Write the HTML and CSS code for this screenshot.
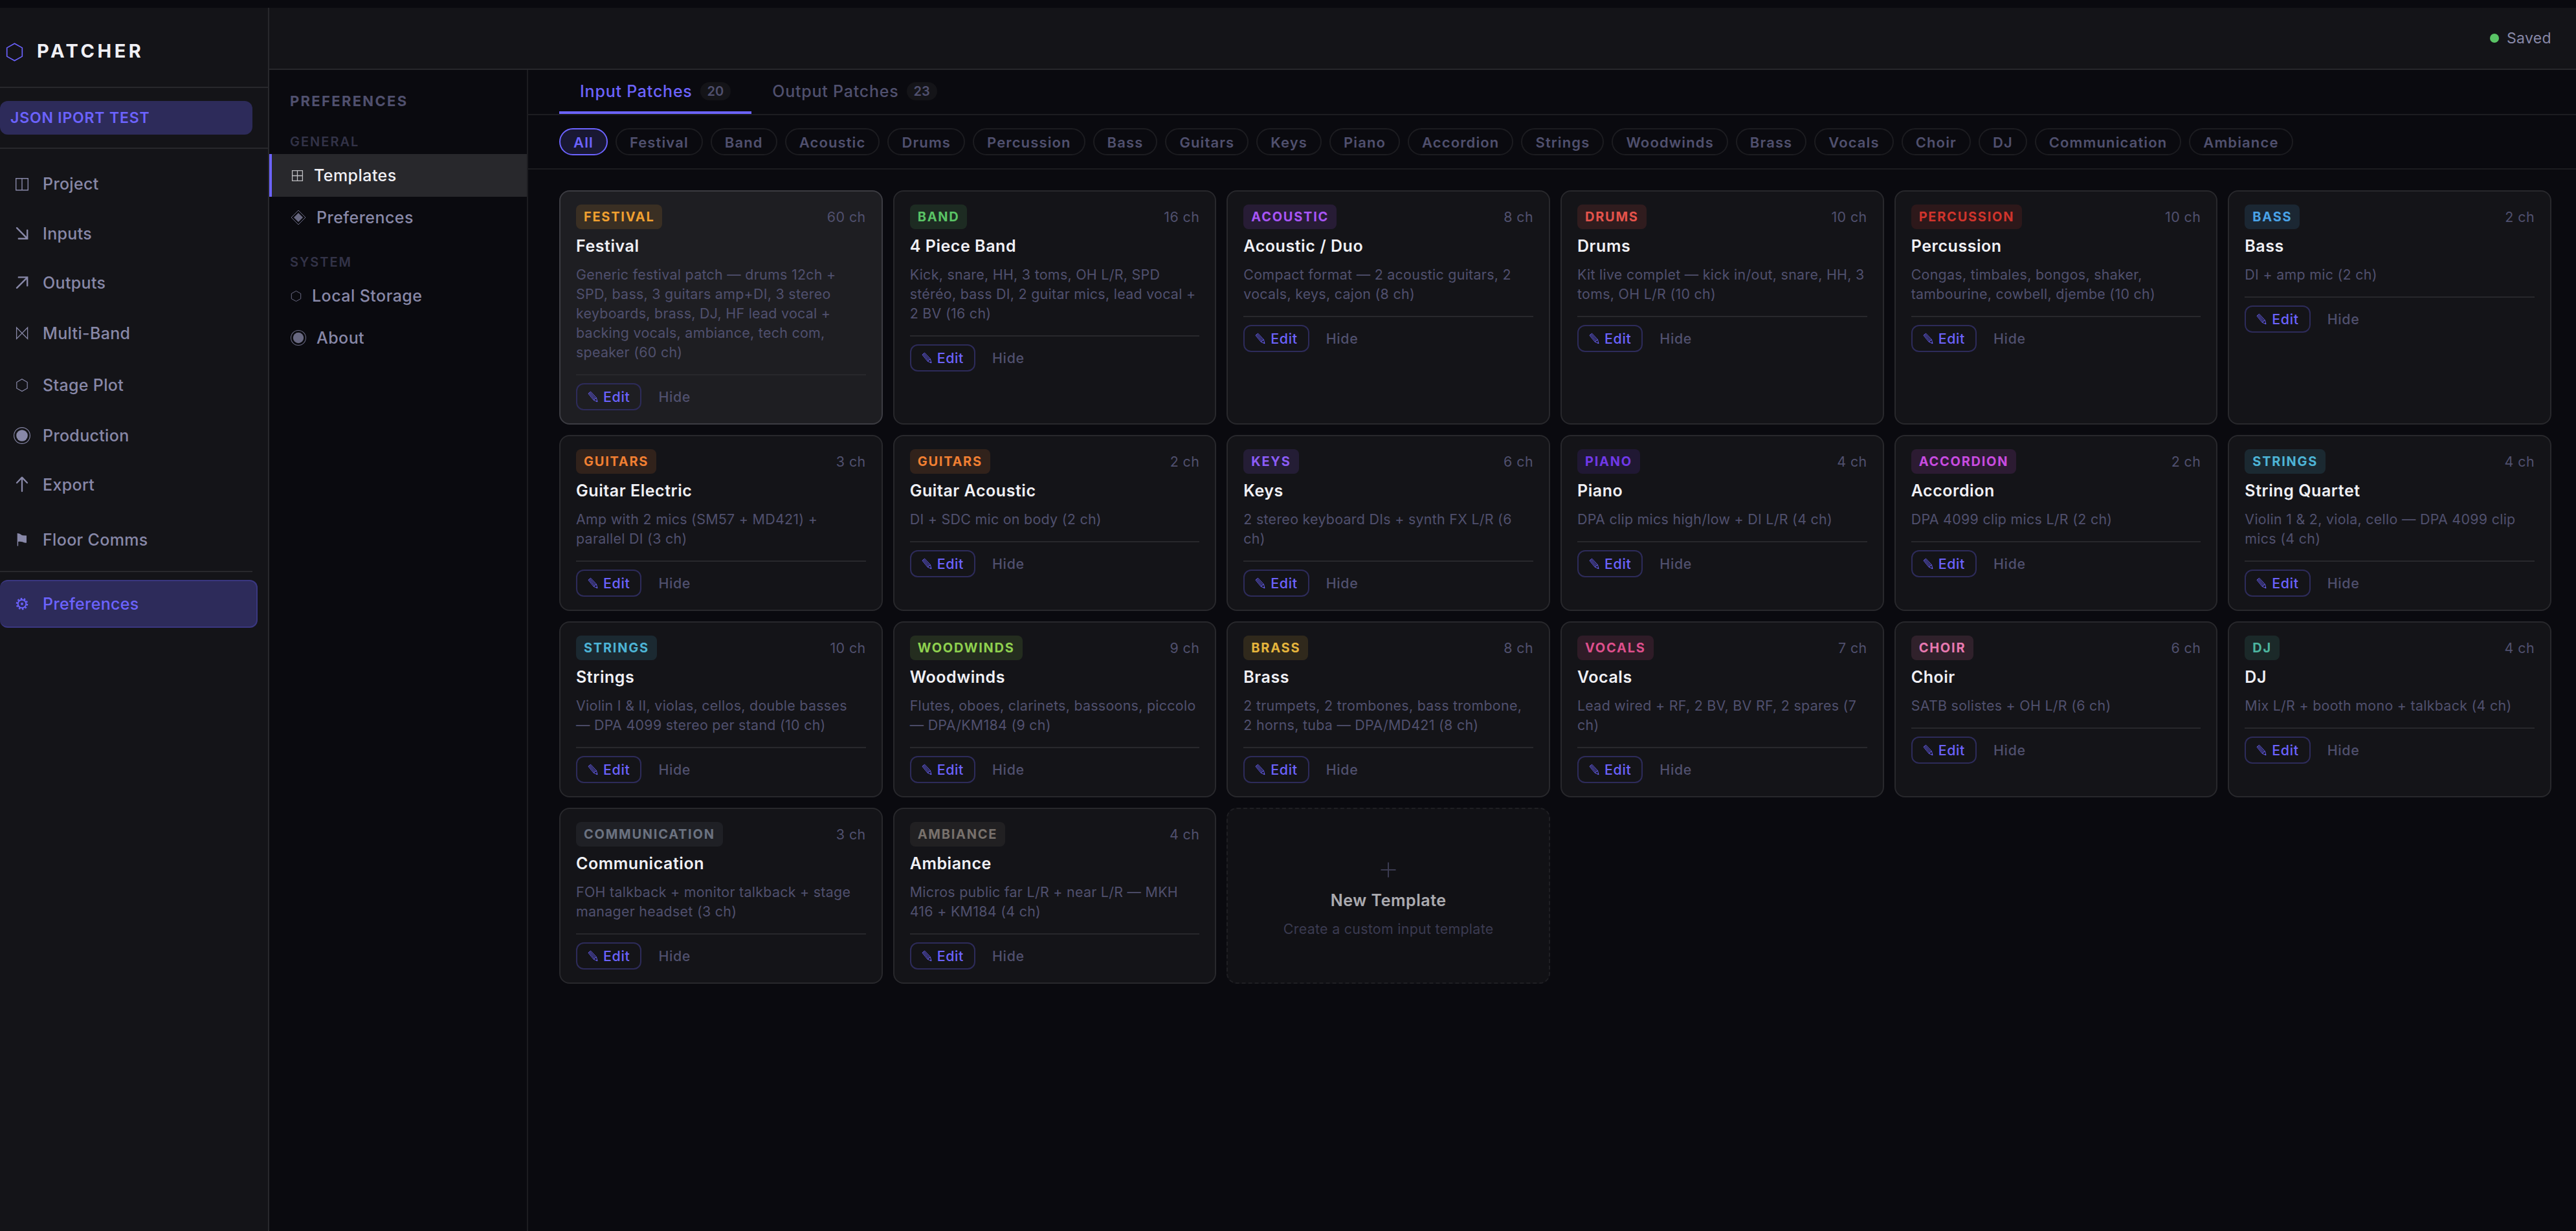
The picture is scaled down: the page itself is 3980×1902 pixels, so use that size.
FILE: index.html
```html
<!DOCTYPE html>
<html lang="en">
<head>
    <meta charset="UTF-8">
    <meta name="viewport" content="width=device-width, initial-scale=1.0">
    <title>Patcher - Preferences</title>
    <link rel="stylesheet" href="styles.css">
</head>
<body>
<svg class="defs">
    <symbol id="pencil" viewBox="0 0 16 18"><path d="M1 4.2 4.6 1.2 13.4 10.6 15 16.8 9.2 14.2z M2.2 3.2 10.6 13.2 M3.4 2.2 12 11.9 M9.2 14.2 13.4 10.6" fill="none" stroke="currentColor" stroke-width="0.9"/><path d="M13 15.9 14.2 14.6 15 16.9z" fill="currentColor"/></symbol>
    <symbol id="hexagon" viewBox="0 0 28 28"><path d="M14 1.2 25.4 7.6V20.4L14 26.8 2.6 20.4V7.6z" fill="none" stroke="currentColor"/></symbol>
    <symbol id="target" viewBox="0 0 28 28"><circle cx="14" cy="14" r="12.4" fill="none" stroke="currentColor" stroke-width="1.1"/><circle cx="14" cy="14" r="8.8" fill="currentColor"/></symbol>
</svg>

<div class="app">
    <aside class="sidebar">
        <div class="logo"><svg class="logo-icon"><use href="#hexagon"/></svg><span>PATCHER</span></div>
        <div class="project"><div class="project-name">JSON IPORT TEST</div></div>
        <nav class="nav">
            <a class="nav-item"><svg viewBox="0 0 28 28"><path d="M4.7 5.8h18.6v18H4.7zM14 5.8v18" fill="none" stroke="currentColor" stroke-width="1.4"/></svg>Project</a>
            <a class="nav-item"><svg viewBox="0 0 28 28"><path d="M6 5.2 22 21.4M8.8 21.8h13.4V8.6" fill="none" stroke="currentColor" stroke-width="2.4" stroke-linecap="round"/></svg>Inputs</a>
            <a class="nav-item"><svg viewBox="0 0 28 28"><path d="M6 21.8 22 5.8M8.8 5.4h13.4v13" fill="none" stroke="currentColor" stroke-width="2.4" stroke-linecap="round"/></svg>Outputs</a>
            <a class="nav-item"><svg viewBox="0 0 28 28"><path d="M5.6 5.2v17.2L22.6 5.2v17.2z" fill="none" stroke="currentColor" stroke-width="1.3"/></svg>Multi-Band</a>
            <a class="nav-item"><svg viewBox="0 0 28 28"><path d="M14 4.8 22.2 9.5v9.4L14 23.6 5.8 18.9V9.5z" fill="none" stroke="currentColor" stroke-width="1.2"/></svg>Stage Plot</a>
            <a class="nav-item"><svg><use href="#target"/></svg>Production</a>
            <a class="nav-item"><svg viewBox="0 0 28 28"><path d="M14 24V3M6 11l8-8.4L22 11" fill="none" stroke="currentColor" stroke-width="2.3" stroke-linecap="round" stroke-linejoin="round"/></svg>Export</a>
            <a class="nav-item"><svg viewBox="0 0 28 28"><path d="M7.4 4v19.6" stroke="currentColor" stroke-width="1.4"/><path d="M7.4 4.4c4-.8 5 2.8 8 2.8l5.6.4v11c-3 .6-4-.4-6.5-1.3-3-1-5-.6-7.1-.3z" fill="currentColor"/></svg>Floor Comms</a>
            <div class="nav-sep"></div>
            <a class="nav-item active"><svg viewBox="0 0 28 28"><g fill="none" stroke="currentColor"><circle cx="14" cy="14" r="6.3" stroke-width="1.9"/><circle cx="14" cy="14" r="8.2" stroke-width="2.2" stroke-dasharray="2.58 2.58"/></g><circle cx="14" cy="14" r="1.9" fill="currentColor"/></svg>Preferences</a>
        </nav>
    </aside>

    <div class="content">
        <header class="topbar"><span class="dot"></span><span class="saved">Saved</span></header>
        <div class="page">
            <aside class="prefs">
                <h2>PREFERENCES</h2>
                <h3>GENERAL</h3>
                <a class="pref-item active"><svg class="i18" viewBox="0 0 18 18"><path d="M1.5 1.5h15v15h-15zM9 1.5v15M1.5 9h15" fill="none" stroke="currentColor" stroke-width="1.2"/></svg>Templates</a>
                <a class="pref-item"><svg class="i24" viewBox="0 0 24 24"><path d="M12 1 23 12 12 23 1 12z" fill="none" stroke="currentColor"/><path d="M12 5 19 12 12 19 5 12z" fill="currentColor"/></svg>Preferences</a>
                <h3 class="second">SYSTEM</h3>
                <a class="pref-item"><svg class="i17" viewBox="0 0 17 17"><path d="M8.5.6 15.7 4.6V12.6L8.5 16.5 1.3 12.6V4.6z" fill="none" stroke="currentColor"/></svg>Local Storage</a>
                <a class="pref-item"><svg class="i26"><use href="#target"/></svg>About</a>
            </aside>

            <main class="main">
                <div class="tabs">
                    <a class="tab active">Input Patches<span class="count">20</span></a>
                    <a class="tab">Output Patches<span class="count">23</span></a>
                </div>
                <div class="filters">
                    <span class="pill active">All</span>
                    <span class="pill">Festival</span>
                    <span class="pill">Band</span>
                    <span class="pill">Acoustic</span>
                    <span class="pill">Drums</span>
                    <span class="pill">Percussion</span>
                    <span class="pill">Bass</span>
                    <span class="pill">Guitars</span>
                    <span class="pill">Keys</span>
                    <span class="pill">Piano</span>
                    <span class="pill">Accordion</span>
                    <span class="pill">Strings</span>
                    <span class="pill">Woodwinds</span>
                    <span class="pill">Brass</span>
                    <span class="pill">Vocals</span>
                    <span class="pill">Choir</span>
                    <span class="pill">DJ</span>
                    <span class="pill">Communication</span>
                    <span class="pill">Ambiance</span>
                </div>

                <div class="grid">
                    <div class="card hover">
                        <div class="card-top"><span class="badge festival">FESTIVAL</span><span class="ch">60 ch</span></div>
                        <h4>Festival</h4>
                        <p>Generic festival patch — drums 12ch + SPD, bass, 3 guitars amp+DI, 3 stereo keyboards, brass, DJ, HF lead vocal + backing vocals, ambiance, tech com, speaker (60 ch)</p>
                        <div class="actions"><button class="edit"><svg><use href="#pencil"/></svg>Edit</button><button class="hide">Hide</button></div>
                    </div>
                    <div class="card">
                        <div class="card-top"><span class="badge band">BAND</span><span class="ch">16 ch</span></div>
                        <h4>4 Piece Band</h4>
                        <p>Kick, snare, HH, 3 toms, OH L/R, SPD stéréo, bass DI, 2 guitar mics, lead vocal + 2 BV (16 ch)</p>
                        <div class="actions"><button class="edit"><svg><use href="#pencil"/></svg>Edit</button><button class="hide">Hide</button></div>
                    </div>
                    <div class="card">
                        <div class="card-top"><span class="badge acoustic">ACOUSTIC</span><span class="ch">8 ch</span></div>
                        <h4>Acoustic / Duo</h4>
                        <p>Compact format — 2 acoustic guitars, 2 vocals, keys, cajon (8 ch)</p>
                        <div class="actions"><button class="edit"><svg><use href="#pencil"/></svg>Edit</button><button class="hide">Hide</button></div>
                    </div>
                    <div class="card">
                        <div class="card-top"><span class="badge drums">DRUMS</span><span class="ch">10 ch</span></div>
                        <h4>Drums</h4>
                        <p>Kit live complet — kick in/out, snare, HH, 3 toms, OH L/R (10 ch)</p>
                        <div class="actions"><button class="edit"><svg><use href="#pencil"/></svg>Edit</button><button class="hide">Hide</button></div>
                    </div>
                    <div class="card">
                        <div class="card-top"><span class="badge percussion">PERCUSSION</span><span class="ch">10 ch</span></div>
                        <h4>Percussion</h4>
                        <p>Congas, timbales, bongos, shaker, tambourine, cowbell, djembe (10 ch)</p>
                        <div class="actions"><button class="edit"><svg><use href="#pencil"/></svg>Edit</button><button class="hide">Hide</button></div>
                    </div>
                    <div class="card">
                        <div class="card-top"><span class="badge bass">BASS</span><span class="ch">2 ch</span></div>
                        <h4>Bass</h4>
                        <p>DI + amp mic (2 ch)</p>
                        <div class="actions"><button class="edit"><svg><use href="#pencil"/></svg>Edit</button><button class="hide">Hide</button></div>
                    </div>

                    <div class="card">
                        <div class="card-top"><span class="badge guitars">GUITARS</span><span class="ch">3 ch</span></div>
                        <h4>Guitar Electric</h4>
                        <p>Amp with 2 mics (SM57 + MD421) + parallel DI (3 ch)</p>
                        <div class="actions"><button class="edit"><svg><use href="#pencil"/></svg>Edit</button><button class="hide">Hide</button></div>
                    </div>
                    <div class="card">
                        <div class="card-top"><span class="badge guitars">GUITARS</span><span class="ch">2 ch</span></div>
                        <h4>Guitar Acoustic</h4>
                        <p>DI + SDC mic on body (2 ch)</p>
                        <div class="actions"><button class="edit"><svg><use href="#pencil"/></svg>Edit</button><button class="hide">Hide</button></div>
                    </div>
                    <div class="card">
                        <div class="card-top"><span class="badge keys">KEYS</span><span class="ch">6 ch</span></div>
                        <h4>Keys</h4>
                        <p>2 stereo keyboard DIs + synth FX L/R (6 ch)</p>
                        <div class="actions"><button class="edit"><svg><use href="#pencil"/></svg>Edit</button><button class="hide">Hide</button></div>
                    </div>
                    <div class="card">
                        <div class="card-top"><span class="badge piano">PIANO</span><span class="ch">4 ch</span></div>
                        <h4>Piano</h4>
                        <p>DPA clip mics high/low + DI L/R (4 ch)</p>
                        <div class="actions"><button class="edit"><svg><use href="#pencil"/></svg>Edit</button><button class="hide">Hide</button></div>
                    </div>
                    <div class="card">
                        <div class="card-top"><span class="badge accordion">ACCORDION</span><span class="ch">2 ch</span></div>
                        <h4>Accordion</h4>
                        <p>DPA 4099 clip mics L/R (2 ch)</p>
                        <div class="actions"><button class="edit"><svg><use href="#pencil"/></svg>Edit</button><button class="hide">Hide</button></div>
                    </div>
                    <div class="card">
                        <div class="card-top"><span class="badge strings">STRINGS</span><span class="ch">4 ch</span></div>
                        <h4>String Quartet</h4>
                        <p>Violin 1 &amp; 2, viola, cello — DPA 4099 clip mics (4 ch)</p>
                        <div class="actions"><button class="edit"><svg><use href="#pencil"/></svg>Edit</button><button class="hide">Hide</button></div>
                    </div>

                    <div class="card">
                        <div class="card-top"><span class="badge strings">STRINGS</span><span class="ch">10 ch</span></div>
                        <h4>Strings</h4>
                        <p>Violin I &amp; II, violas, cellos, double basses —&nbsp;DPA 4099 stereo per stand (10 ch)</p>
                        <div class="actions"><button class="edit"><svg><use href="#pencil"/></svg>Edit</button><button class="hide">Hide</button></div>
                    </div>
                    <div class="card">
                        <div class="card-top"><span class="badge woodwinds">WOODWINDS</span><span class="ch">9 ch</span></div>
                        <h4>Woodwinds</h4>
                        <p>Flutes, oboes, clarinets, bassoons, piccolo — DPA/KM184 (9 ch)</p>
                        <div class="actions"><button class="edit"><svg><use href="#pencil"/></svg>Edit</button><button class="hide">Hide</button></div>
                    </div>
                    <div class="card">
                        <div class="card-top"><span class="badge brass">BRASS</span><span class="ch">8 ch</span></div>
                        <h4>Brass</h4>
                        <p>2 trumpets, 2 trombones, bass trombone, 2 horns, tuba — DPA/MD421 (8 ch)</p>
                        <div class="actions"><button class="edit"><svg><use href="#pencil"/></svg>Edit</button><button class="hide">Hide</button></div>
                    </div>
                    <div class="card">
                        <div class="card-top"><span class="badge vocals">VOCALS</span><span class="ch">7 ch</span></div>
                        <h4>Vocals</h4>
                        <p>Lead wired + RF, 2 BV, BV RF, 2 spares (7 ch)</p>
                        <div class="actions"><button class="edit"><svg><use href="#pencil"/></svg>Edit</button><button class="hide">Hide</button></div>
                    </div>
                    <div class="card">
                        <div class="card-top"><span class="badge choir">CHOIR</span><span class="ch">6 ch</span></div>
                        <h4>Choir</h4>
                        <p>SATB solistes + OH L/R (6 ch)</p>
                        <div class="actions"><button class="edit"><svg><use href="#pencil"/></svg>Edit</button><button class="hide">Hide</button></div>
                    </div>
                    <div class="card">
                        <div class="card-top"><span class="badge dj">DJ</span><span class="ch">4 ch</span></div>
                        <h4>DJ</h4>
                        <p>Mix L/R + booth mono + talkback (4 ch)</p>
                        <div class="actions"><button class="edit"><svg><use href="#pencil"/></svg>Edit</button><button class="hide">Hide</button></div>
                    </div>

                    <div class="card">
                        <div class="card-top"><span class="badge communication">COMMUNICATION</span><span class="ch">3 ch</span></div>
                        <h4>Communication</h4>
                        <p>FOH talkback + monitor talkback + stage manager headset (3 ch)</p>
                        <div class="actions"><button class="edit"><svg><use href="#pencil"/></svg>Edit</button><button class="hide">Hide</button></div>
                    </div>
                    <div class="card">
                        <div class="card-top"><span class="badge ambiance">AMBIANCE</span><span class="ch">4 ch</span></div>
                        <h4>Ambiance</h4>
                        <p>Micros public far L/R + near L/R — MKH 416 + KM184 (4 ch)</p>
                        <div class="actions"><button class="edit"><svg><use href="#pencil"/></svg>Edit</button><button class="hide">Hide</button></div>
                    </div>
                    <div class="card new">
                        <svg class="plus" viewBox="0 0 24 24"><path d="M12 .5v23M.5 12h23" stroke="currentColor" stroke-width="2"/></svg>
                        <h4>New Template</h4>
                        <p>Create a custom input template</p>
                    </div>
                </div>
            </main>
        </div>
    </div>
</div>
</body>
</html>
```
FILE: styles.css
```css
* {
    box-sizing: border-box;
}

body {
    margin: 0;
    padding-top: 12px;
    height: 1902px;
    background: #0a0a0f;
    font-family: Inter, "Liberation Sans", sans-serif;
    font-size: 25px;
    letter-spacing: 0.0135em;
    color: #f0f0f5;
    overflow: hidden;
}

h2, h3, h4, p {
    margin: 0;
}

svg {
    flex-shrink: 0;
}

.defs {
    display: none;
}

.app {
    display: flex;
    height: 1890px;
}

/* left sidebar */
.sidebar {
    width: 416px;
    background: #141418;
    border-right: 2px solid #28282c;
}

.logo {
    height: 124px;
    display: flex;
    align-items: center;
    gap: 20px;
    padding: 14px 0 0 8px;
    border-bottom: 2px solid #28282c;
    font-size: 29px;
    font-weight: 700;
    letter-spacing: 0.156em;
}

.logo span {
    margin-top: -3px;
}

.logo-icon {
    width: 29px;
    height: 29px;
    color: #6c63ff;
    stroke-width: 1.6;
}

.project {
    height: 94px;
    padding: 20px 24px 0 0;
    border-bottom: 2px solid #28282c;
}

.project-name {
    height: 52px;
    line-height: 52px;
    padding-left: 16px;
    border-radius: 12px;
    background: #2d2b5a;
    color: #6c63ff;
    font-size: 23px;
    font-weight: 600;
    letter-spacing: 0.035em;
}

.nav {
    display: grid;
    grid-template-rows: 76px 78px 74px 82px 78px 78px 74px 96px 2px 86px;
    padding: 16px 16px 0 0;
}

.nav-item {
    display: flex;
    align-items: center;
    gap: 18px;
    padding-left: 20px;
    font-weight: 500;
    color: #8888a8;
}

.nav-item svg {
    width: 28px;
    height: 28px;
}

.nav-sep {
    margin-right: 8px;
    background: #28282c;
}

.nav-item.active {
    margin-top: 12px;
    border: 2px solid #3a3780;
    border-left: none;
    border-radius: 12px;
    background: #2d2b5a;
    color: #6c63ff;
}

.content {
    flex: 1;
    display: flex;
    flex-direction: column;
}

.topbar {
    height: 96px;
    display: flex;
    align-items: center;
    justify-content: flex-end;
    gap: 12px;
    padding-right: 38px;
    background: #141418;
    border-bottom: 2px solid #28282c;
}

.dot {
    width: 14px;
    height: 14px;
    border-radius: 50%;
    background: #5ac466;
}

.saved {
    font-size: 23px;
    color: #8888a8;
}

.page {
    flex: 1;
    display: flex;
}

/* preferences menu */
.prefs {
    width: 400px;
    padding-top: 33px;
    border-right: 2px solid #1c1c20;
}

.prefs h2 {
    height: 30px;
    line-height: 30px;
    padding-left: 32px;
    font-size: 22px;
    font-weight: 700;
    letter-spacing: 0.105em;
    color: #50506e;
}

.prefs h3 {
    height: 67px;
    padding: 35px 0 0 32px;
    font-size: 20px;
    line-height: 26px;
    font-weight: 600;
    letter-spacing: 0.1em;
    color: #333348;
}

.prefs h3.second {
    height: 57px;
    padding-top: 25px;
}

.pref-item {
    display: flex;
    align-items: center;
    gap: 16px;
    height: 66px;
    padding-left: 33px;
    font-weight: 500;
    letter-spacing: 0.018em;
    color: #8888a8;
}

.pref-item + .pref-item {
    height: 63px;
}

.pref-item svg {
    opacity: 0.75;
}

.pref-item.active {
    padding-left: 30px;
    border-left: 4px solid #6c63ff;
    background: #28282c;
    color: #f0f0f5;
}

.i17 {
    width: 17px;
    height: 17px;
}

.i18 {
    width: 19px;
    height: 19px;
}

.i24 {
    width: 24px;
    height: 24px;
}

.i26 {
    width: 26px;
    height: 26px;
    margin: 0 -1px;
}

.main {
    flex: 1;
}

.tabs {
    display: flex;
    height: 70px;
    padding-left: 48px;
    border-bottom: 2px solid #1c1c20;
}

.tab {
    display: flex;
    align-items: center;
    gap: 12px;
    height: 68px;
    padding: 2px 32px 0;
    border-bottom: 4px solid transparent;
    font-weight: 500;
    letter-spacing: 0.031em;
    color: #50506e;
}

.tab.active {
    border-color: #6c63ff;
    color: #6c63ff;
}

.count {
    height: 28px;
    line-height: 28px;
    padding: 0 11px;
    border-radius: 14px;
    background: #141418;
    font-size: 20px;
    font-weight: 600;
    letter-spacing: 0;
    color: #50506e;
}

.filters {
    display: flex;
    gap: 12px;
    height: 84px;
    padding: 20px 0 0 48px;
    border-bottom: 2px solid #1c1c20;
}

.pill {
    height: 42px;
    line-height: 40px;
    padding: 0 20px;
    border: 2px solid #1c1c20;
    border-radius: 21px;
    font-size: 22px;
    font-weight: 600;
    letter-spacing: 0.051em;
    color: #50506e;
}

.pill.active {
    border-color: #6c63ff;
    background: #191833;
    color: #6c63ff;
}

/* template cards */
.grid {
    display: grid;
    grid-template-columns: repeat(6, 1fr);
    gap: 16px;
    padding: 32px 38px 0 48px;
}

.card {
    padding: 20px 24px;
    border: 2px solid #28282c;
    border-radius: 16px;
    background: #141418;
}

.card.hover {
    border-color: #3c3c42;
    background: #1e1e22;
}

.card-top {
    display: flex;
    justify-content: space-between;
    align-items: center;
    height: 38px;
}

.badge {
    height: 38px;
    line-height: 38px;
    padding: 0 12px;
    border-radius: 8px;
    font-size: 20px;
    font-weight: 700;
    letter-spacing: 0.087em;
}

.ch {
    font-size: 21.4px;
    letter-spacing: 0.02em;
    color: #50506e;
}

.card h4 {
    margin: 10px 0 13px;
    font-size: 25px;
    line-height: 32px;
    font-weight: 600;
    letter-spacing: 0.022em;
}

.card p {
    font-size: 21.4px;
    line-height: 30px;
    letter-spacing: 0.0135em;
    color: #50506e;
}

.actions {
    display: flex;
    gap: 8px;
    margin-top: 19px;
    padding-top: 12px;
    border-top: 2px solid #28282c;
}

.actions button {
    display: flex;
    align-items: center;
    height: 42px;
    padding: 0 16px;
    border: 2px solid transparent;
    border-radius: 12px;
    background: none;
    font: 500 21.4px Inter, "Liberation Sans", sans-serif;
    letter-spacing: 0.03em;
    color: #50506e;
}

.actions .edit {
    gap: 8px;
    border-color: #2d2b5a;
    color: #6c63ff;
}

.edit svg {
    width: 16px;
    height: 18px;
}

.festival { color: #f0a030; background: #f0a03022; }
.band { color: #5ac466; background: #5ac46622; }
.acoustic { color: #a855f7; background: #a855f722; }
.drums { color: #e5534b; background: #e5534b22; }
.percussion { color: #d0342c; background: #d0342c22; }
.bass { color: #4aa3e8; background: #4aa3e822; }
.guitars { color: #f07f32; background: #f07f3222; }
.keys { color: #8b5cf6; background: #8b5cf622; }
.piano { color: #7038e8; background: #7038e822; }
.accordion { color: #c94be0; background: #c94be022; }
.strings { color: #4db4d6; background: #4db4d622; }
.woodwinds { color: #8fd14f; background: #8fd14f22; }
.brass { color: #e6b53c; background: #e6b53c22; }
.vocals { color: #de4f8c; background: #de4f8c22; }
.choir { color: #e879b0; background: #e879b022; }
.dj { color: #4db6a0; background: #4db6a022; }
.communication { color: #6b7280; background: #6b728022; }
.ambiance { color: #78716c; background: #78716c22; }

.card.new {
    display: flex;
    flex-direction: column;
    align-items: center;
    justify-content: center;
    padding: 0 24px;
    border: 2px dashed #28282c;
    opacity: 0.7;
}

.new .plus {
    width: 24px;
    height: 24px;
    margin: 14px 0 19px;
    color: #50506e;
}

.new h4 {
    margin: 0 0 13px;
}
```
